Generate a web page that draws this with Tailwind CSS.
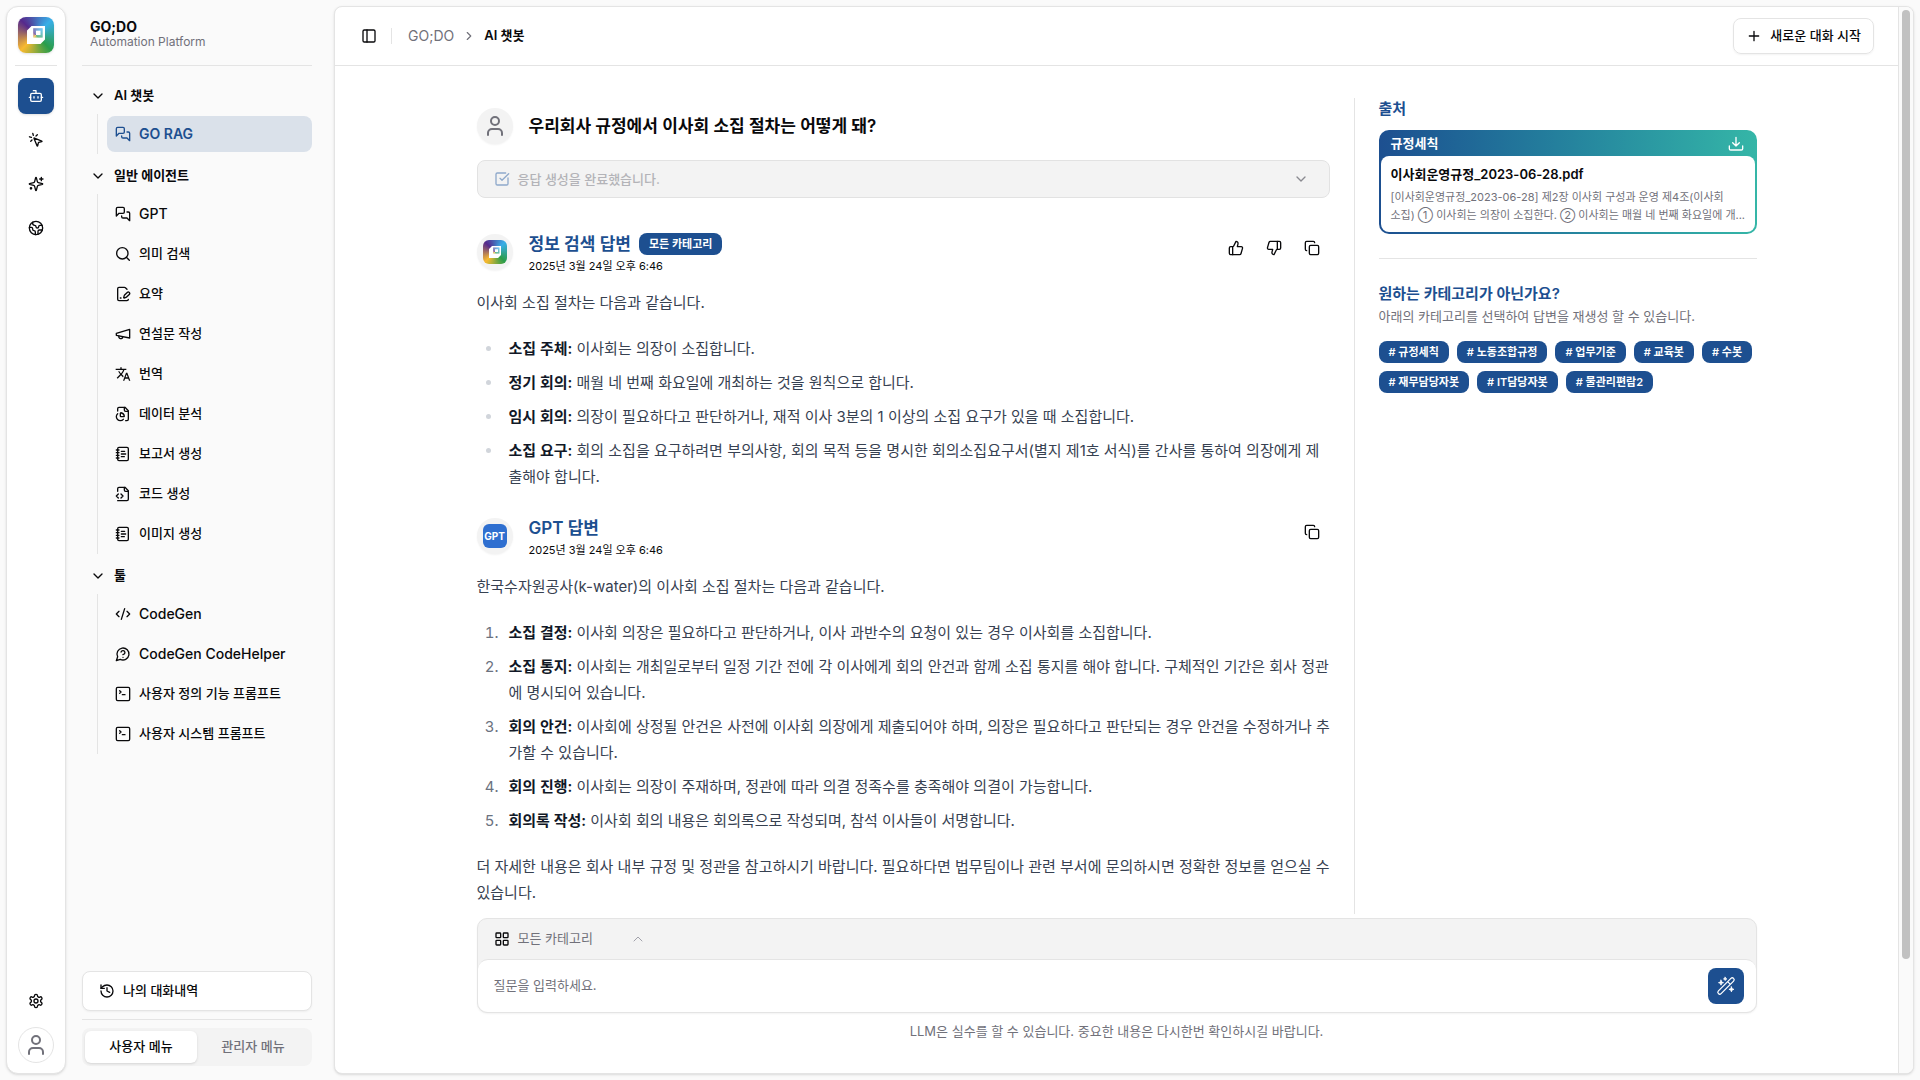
<!DOCTYPE html>
<html lang="ko">
<head>
<meta charset="utf-8">
<meta name="viewport" content="width=device-width, initial-scale=1">
<title>GO;DO - AI 챗봇</title>
<script src="https://cdn.jsdelivr.net/npm/@tailwindcss/browser@4"></script>
</head>
<body class="bg-[#fafafa] font-['Inter','Noto_Sans_CJK_KR',sans-serif] text-[13px] text-[#09090b]">

<svg class="hidden" aria-hidden="true">
  <defs>
    <symbol id="bot" viewBox="0 0 24 24"><path d="M12 8V4H8"/><rect width="16" height="12" x="4" y="8" rx="2"/><path d="M2 14h2M20 14h2M15 13v2M9 13v2"/></symbol>
    <symbol id="click" viewBox="0 0 24 24"><path d="M14 4.1 12 6M5.1 8l-2.9-.8M6 12l-1.9 2M7.2 2.2 8 5.1"/><path d="M9.037 9.69a.498.498 0 0 1 .653-.653l11 4.5a.5.5 0 0 1-.074.949l-4.349 1.041a1 1 0 0 0-.74.739l-1.04 4.35a.5.5 0 0 1-.95.074z"/></symbol>
    <symbol id="sparkles" viewBox="0 0 24 24"><path d="M9.937 15.5A2 2 0 0 0 8.5 14.063l-6.135-1.582a.5.5 0 0 1 0-.962L8.500 9.936A2 2 0 0 0 9.937 8.500l1.582-6.135a.5.5 0 0 1 .963 0L14.063 8.500A2 2 0 0 0 15.500 9.937l6.135 1.581a.5.5 0 0 1 0 .964L15.500 14.063a2 2 0 0 0-1.437 1.437l-1.582 6.135a.5.5 0 0 1-.963 0z"/><path d="M20 2v5M22.500 4.500h-5"/><circle cx="4.500" cy="18.500" r="1"/></symbol>
    <symbol id="earth" viewBox="0 0 24 24"><path d="M21.54 15H17a2 2 0 0 0-2 2v4.540M7 3.340V5a3 3 0 0 0 3 3 2 2 0 0 1 2 2c0 1.100.900 2 2 2a2 2 0 0 0 2-2c0-1.100.900-2 2-2h3.170M11 21.950V18a2 2 0 0 0-2-2 2 2 0 0 1-2-2v-1a2 2 0 0 0-2-2H2.050"/><circle cx="12" cy="12" r="10"/></symbol>
    <symbol id="chats" viewBox="0 0 24 24"><path d="M14 9a2 2 0 0 1-2 2H6l-4 4V4a2 2 0 0 1 2-2h8a2 2 0 0 1 2 2z"/><path d="M18 9h2a2 2 0 0 1 2 2v11l-4-4h-6a2 2 0 0 1-2-2v-1"/></symbol>
    <symbol id="search" viewBox="0 0 24 24"><circle cx="11" cy="11" r="8.5"/><path d="m21.5 21.5-4.5-4.5"/></symbol>
    <symbol id="filepen" viewBox="0 0 24 24"><path d="m18 5-2.414-2.414A2 2 0 0 0 14.172 2H6a2 2 0 0 0-2 2v16a2 2 0 0 0 2 2h12a2 2 0 0 0 2-2"/><path d="M21.378 12.626a1 1 0 0 0-3.004-3.004l-4.01 4.012a2 2 0 0 0-.506.854l-.837 2.87a.5.5 0 0 0 .62.62l2.87-.837a2 2 0 0 0 .854-.506z"/><path d="M8 18h1"/></symbol>
    <symbol id="megaphone" viewBox="0 0 24 24"><path d="m2 11 20-6v13L2 14v-3z"/><path d="M11.6 16.8a3 3 0 1 1-5.8-1.6"/></symbol>
    <symbol id="translate" viewBox="0 0 24 24"><path fill="currentColor" stroke="none" d="M12.87 15.07l-2.54-2.51.03-.03A17.52 17.52 0 0 0 14.07 6H17V4h-7V2H8v2H1v1.99h11.17C11.5 7.92 10.44 9.75 9 11.35 8.07 10.32 7.3 9.19 6.69 8h-2c.73 1.63 1.73 3.17 2.98 4.56l-5.09 5.02L4 19l5-5 3.11 3.11.76-2.04zM18.5 10h-2L12 22h2l1.12-3h4.75L21 22h2l-4.5-12zm-2.62 7l1.62-4.33L19.12 17h-3.24z"/></symbol>
    <symbol id="filepie" viewBox="0 0 24 24"><path d="M14 2v4a2 2 0 0 0 2 2h4"/><path d="M16 22h2a2 2 0 0 0 2-2V7l-5-5H6a2 2 0 0 0-2 2v3.5"/><path d="M4.017 11.512a6 6 0 1 0 8.466 8.475"/><path d="M9 16a1 1 0 0 1-1-1v-4c0-.552.45-1.008.995-.917a6 6 0 0 1 4.922 4.922c.091.544-.365.995-.917.995z"/></symbol>
    <symbol id="notebook" viewBox="0 0 24 24"><path d="M2 6h4M2 10h4M2 14h4M2 18h4"/><rect width="16" height="20" x="4" y="2" rx="2"/><path d="M9.5 8h5M9.5 12H16M9.5 16H14"/></symbol>
    <symbol id="filecode" viewBox="0 0 24 24"><path d="M4 22h14a2 2 0 0 0 2-2V7l-5-5H6a2 2 0 0 0-2 2v4"/><path d="M14 2v4a2 2 0 0 0 2 2h4"/><path d="m5 12-3 3 3 3M9 18l3-3-3-3"/></symbol>
    <symbol id="code" viewBox="0 0 24 24"><path d="m18 16 4-4-4-4M6 8l-4 4 4 4M14.5 4l-5 16"/></symbol>
    <symbol id="question" viewBox="0 0 24 24"><path d="M7.9 20A9 9 0 1 0 4 16.1L2 22Z"/><path d="M9.09 9a3 3 0 0 1 5.83 1c0 2-3 3-3 3M12 17h.01"/></symbol>
    <symbol id="terminal" viewBox="0 0 24 24"><path d="m7 11 2-2-2-2M11 13h4"/><rect width="20" height="20" x="2" y="2" rx="2"/></symbol>
    <symbol id="history" viewBox="0 0 24 24"><path d="M3 12a9 9 0 1 0 9-9 9.75 9.75 0 0 0-6.74 2.74L3 8"/><path d="M3 3v5h5M12 7v5l4 2"/></symbol>
    <symbol id="gear" viewBox="0 0 24 24"><path d="M12.22 2h-.44a2 2 0 0 0-2 2v.18a2 2 0 0 1-1 1.73l-.43.25a2 2 0 0 1-2 0l-.15-.08a2 2 0 0 0-2.73.73l-.22.38a2 2 0 0 0 .73 2.73l.15.1a2 2 0 0 1 1 1.72v.51a2 2 0 0 1-1 1.74l-.15.09a2 2 0 0 0-.73 2.73l.22.38a2 2 0 0 0 2.73.73l.15-.08a2 2 0 0 1 2 0l.43.25a2 2 0 0 1 1 1.73V20a2 2 0 0 0 2 2h.44a2 2 0 0 0 2-2v-.18a2 2 0 0 1 1-1.73l.43-.25a2 2 0 0 1 2 0l.15.08a2 2 0 0 0 2.73-.73l.22-.39a2 2 0 0 0-.73-2.73l-.15-.08a2 2 0 0 1-1-1.74v-.5a2 2 0 0 1 1-1.74l.15-.09a2 2 0 0 0 .73-2.73l-.22-.38a2 2 0 0 0-2.73-.73l-.15.08a2 2 0 0 1-2 0l-.43-.25a2 2 0 0 1-1-1.73V4a2 2 0 0 0-2-2z"/><circle cx="12" cy="12" r="3"/></symbol>
    <symbol id="user" viewBox="0 0 24 24"><path d="M19 21v-2a4 4 0 0 0-4-4H9a4 4 0 0 0-4 4v2"/><circle cx="12" cy="7" r="4"/></symbol>
    <symbol id="check" viewBox="0 0 24 24"><path d="M21 10.5V19a2 2 0 0 1-2 2H5a2 2 0 0 1-2-2V5a2 2 0 0 1 2-2h12.5"/><path d="m9 11 3 3L22 4"/></symbol>
    <symbol id="up" viewBox="0 0 24 24"><path d="M7 10v12"/><path d="M15 5.88 14 10h5.83a2 2 0 0 1 1.92 2.56l-2.33 8A2 2 0 0 1 17.5 22H4a2 2 0 0 1-2-2v-8a2 2 0 0 1 2-2h2.76a2 2 0 0 0 1.79-1.11L12 2a3.13 3.13 0 0 1 3 3.88Z"/></symbol>
    <symbol id="down" viewBox="0 0 24 24"><path d="M17 14V2"/><path d="M9 18.12 10 14H4.17a2 2 0 0 1-1.92-2.56l2.33-8A2 2 0 0 1 6.5 2H20a2 2 0 0 1 2 2v8a2 2 0 0 1-2 2h-2.76a2 2 0 0 0-1.79 1.11L12 22a3.13 3.13 0 0 1-3-3.88Z"/></symbol>
    <symbol id="copy" viewBox="0 0 24 24"><rect width="14" height="14" x="8" y="8" rx="2"/><path d="M4 16c-1.1 0-2-.9-2-2V4c0-1.1.9-2 2-2h10c1.1 0 2 .9 2 2"/></symbol>
    <symbol id="download" viewBox="0 0 24 24"><path d="M12 2v13M7 10l5 5 5-5M22 15v4a2 2 0 0 1-2 2H4a2 2 0 0 1-2-2v-4"/></symbol>
    <symbol id="grid" viewBox="0 0 24 24"><rect width="7" height="7" x="3" y="3" rx="1"/><rect width="7" height="7" x="14" y="3" rx="1"/><rect width="7" height="7" x="14" y="14" rx="1"/><rect width="7" height="7" x="3" y="14" rx="1"/></symbol>
    <symbol id="panel" viewBox="0 0 24 24"><rect width="18" height="18" x="3" y="3" rx="2"/><path d="M9 3v18"/></symbol>
    <symbol id="cdown" viewBox="0 0 24 24"><path d="m6 9 6 6 6-6"/></symbol>
    <symbol id="cup" viewBox="0 0 24 24"><path d="m6 15 6-6 6 6"/></symbol>
    <symbol id="cright" viewBox="0 0 24 24"><path d="m9 18 6-6-6-6"/></symbol>
    <symbol id="plus" viewBox="0 0 24 24"><path d="M5 12h14M12 5v14"/></symbol>
    <symbol id="wand" viewBox="0 0 24 24"><path d="m2.9 17.9 15-15a2.2 2.2 0 0 1 3.2 3.2l-15 15a2.2 2.2 0 0 1-3.2-3.2zM14 6.8l3.2 3.2"/><path fill="currentColor" stroke-width="1" d="m6 5 .8 2.2L9 8l-2.2.8L6 11l-.8-2.2L3 8l2.2-.8zM18.500 13l.8 2.200 2.200.8-2.200.8-.8 2.200-.8-2.200-2.200-.8 2.200-.8zM11 1.500l.6 1.400 1.400.6-1.400.6-.6 1.400-.6-1.400-1.400-.6 1.400-.6z"/></symbol>
    <symbol id="mark" viewBox="0 0 36 36"><path fill="#fff" stroke="none" fill-rule="evenodd" d="M13.500 9H27v13.500L22.500 27H9V13.500zM15.300 11.200v9.200h9.300v-9.200z"/><path fill="#fff" fill-opacity=".3" stroke="none" d="M15.300 11.200h9.300v9.200h-9.300z"/><path fill="#fff" stroke="none" d="M18 13.700h4.500V18H18z"/></symbol>
  </defs>
</svg>

<div class="flex min-h-screen p-1.5">

  <nav aria-label="주 메뉴" class="flex w-15 shrink-0 flex-col items-center rounded-xl border border-[#e4e4e4] bg-white py-2.5 shadow-sm">
    <a href="#" aria-label="GO;DO" class="size-9 rounded-lg bg-[conic-gradient(from_45deg,#38aee8,#2a9d4a_90deg,#f8b92f_180deg,#55298c_270deg,#38aee8)] shadow-sm"><svg class="size-9"><use href="#mark"/></svg></a>
    <hr class="mt-3 mb-3 w-[42px] border-[#e4e4e4]">
    <div class="flex flex-col gap-2">
      <a href="#" aria-label="AI 챗봇" class="flex size-9 items-center justify-center rounded-lg bg-[#1d4f90] text-white shadow-sm"><svg class="size-4 fill-none stroke-current stroke-2 [stroke-linecap:round] [stroke-linejoin:round]"><use href="#bot"/></svg></a>
      <a href="#" aria-label="자동화" class="flex size-9 items-center justify-center"><svg class="size-4 fill-none stroke-current stroke-2 [stroke-linecap:round] [stroke-linejoin:round]"><use href="#click"/></svg></a>
      <a href="#" aria-label="생성" class="flex size-9 items-center justify-center"><svg class="size-4 fill-none stroke-current stroke-2 [stroke-linecap:round] [stroke-linejoin:round]"><use href="#sparkles"/></svg></a>
      <a href="#" aria-label="탐색" class="flex size-9 items-center justify-center"><svg class="size-4 fill-none stroke-current stroke-2 [stroke-linecap:round] [stroke-linejoin:round]"><use href="#earth"/></svg></a>
    </div>
    <div class="mt-auto flex flex-col gap-2">
      <button aria-label="설정" class="flex size-9 items-center justify-center"><svg class="size-4 fill-none stroke-current stroke-2 [stroke-linecap:round] [stroke-linejoin:round]"><use href="#gear"/></svg></button>
      <button aria-label="내 계정" class="flex size-9 items-center justify-center rounded-full border border-[#e4e4e4] text-[#71717a]"><svg class="size-6 fill-none stroke-current stroke-2 [stroke-linecap:round] [stroke-linejoin:round]"><use href="#user"/></svg></button>
    </div>
  </nav>

  <aside class="flex w-[268px] shrink-0 flex-col pr-[22px] pb-2 pl-4">
    <div class="h-[60px] border-b border-[#e4e4e4] px-2 pt-[13px]">
      <div class="text-sm leading-4 font-bold">GO;DO</div>
      <div class="text-xs leading-[14px] text-[#71717a]">Automation Platform</div>
    </div>

    <div class="mt-3 flex flex-col gap-1">
      <section>
        <button class="flex h-9 items-center gap-2 px-2 font-semibold"><svg class="size-4 fill-none stroke-current stroke-2 [stroke-linecap:round] [stroke-linejoin:round]"><use href="#cdown"/></svg>AI 챗봇</button>
        <ul class="ml-[15px] border-l border-[#e4e4e4] py-0.5 pl-[9px]">
          <li><a href="#" class="flex h-9 items-center gap-2 rounded-lg bg-[#dae1ea] px-2 text-sm font-semibold text-[#1d4f90]"><svg class="size-4 fill-none stroke-current stroke-2 [stroke-linecap:round] [stroke-linejoin:round]"><use href="#chats"/></svg>GO RAG</a></li>
        </ul>
      </section>
      <section>
        <button class="flex h-9 items-center gap-2 px-2 font-semibold"><svg class="size-4 fill-none stroke-current stroke-2 [stroke-linecap:round] [stroke-linejoin:round]"><use href="#cdown"/></svg>일반 에이전트</button>
        <ul class="ml-[15px] flex flex-col gap-1 border-l border-[#e4e4e4] py-0.5 pl-[9px] font-medium">
          <li><a href="#" class="flex h-9 items-center gap-2 px-2 text-sm"><svg class="size-4 fill-none stroke-current stroke-2 [stroke-linecap:round] [stroke-linejoin:round]"><use href="#chats"/></svg>GPT</a></li>
          <li><a href="#" class="flex h-9 items-center gap-2 px-2"><svg class="size-4 fill-none stroke-current stroke-2 [stroke-linecap:round] [stroke-linejoin:round]"><use href="#search"/></svg>의미 검색</a></li>
          <li><a href="#" class="flex h-9 items-center gap-2 px-2"><svg class="size-4 fill-none stroke-current stroke-2 [stroke-linecap:round] [stroke-linejoin:round]"><use href="#filepen"/></svg>요약</a></li>
          <li><a href="#" class="flex h-9 items-center gap-2 px-2"><svg class="size-4 fill-none stroke-current stroke-2 [stroke-linecap:round] [stroke-linejoin:round]"><use href="#megaphone"/></svg>연설문 작성</a></li>
          <li><a href="#" class="flex h-9 items-center gap-2 px-2"><svg class="size-4"><use href="#translate"/></svg>번역</a></li>
          <li><a href="#" class="flex h-9 items-center gap-2 px-2"><svg class="size-4 fill-none stroke-current stroke-2 [stroke-linecap:round] [stroke-linejoin:round]"><use href="#filepie"/></svg>데이터 분석</a></li>
          <li><a href="#" class="flex h-9 items-center gap-2 px-2"><svg class="size-4 fill-none stroke-current stroke-2 [stroke-linecap:round] [stroke-linejoin:round]"><use href="#notebook"/></svg>보고서 생성</a></li>
          <li><a href="#" class="flex h-9 items-center gap-2 px-2"><svg class="size-4 fill-none stroke-current stroke-2 [stroke-linecap:round] [stroke-linejoin:round]"><use href="#filecode"/></svg>코드 생성</a></li>
          <li><a href="#" class="flex h-9 items-center gap-2 px-2"><svg class="size-4 fill-none stroke-current stroke-2 [stroke-linecap:round] [stroke-linejoin:round]"><use href="#notebook"/></svg>이미지 생성</a></li>
        </ul>
      </section>
      <section>
        <button class="flex h-9 items-center gap-2 px-2 font-semibold"><svg class="size-4 fill-none stroke-current stroke-2 [stroke-linecap:round] [stroke-linejoin:round]"><use href="#cdown"/></svg>툴</button>
        <ul class="ml-[15px] flex flex-col gap-1 border-l border-[#e4e4e4] py-0.5 pl-[9px] font-medium">
          <li><a href="#" class="flex h-9 items-center gap-2 px-2 text-sm"><svg class="size-4 fill-none stroke-current stroke-2 [stroke-linecap:round] [stroke-linejoin:round]"><use href="#code"/></svg>CodeGen</a></li>
          <li><a href="#" class="flex h-9 items-center gap-2 px-2 text-sm"><svg class="size-4 fill-none stroke-current stroke-2 [stroke-linecap:round] [stroke-linejoin:round]"><use href="#question"/></svg>CodeGen CodeHelper</a></li>
          <li><a href="#" class="flex h-9 items-center gap-2 px-2"><svg class="size-4 fill-none stroke-current stroke-2 [stroke-linecap:round] [stroke-linejoin:round]"><use href="#terminal"/></svg>사용자 정의 기능 프롬프트</a></li>
          <li><a href="#" class="flex h-9 items-center gap-2 px-2"><svg class="size-4 fill-none stroke-current stroke-2 [stroke-linecap:round] [stroke-linejoin:round]"><use href="#terminal"/></svg>사용자 시스템 프롬프트</a></li>
        </ul>
      </section>
    </div>

    <div class="mt-auto">
      <button class="flex h-10 w-full items-center gap-2 rounded-lg border border-[#e4e4e4] bg-white px-4 font-medium shadow-xs"><svg class="size-4 fill-none stroke-current stroke-2 [stroke-linecap:round] [stroke-linejoin:round]"><use href="#history"/></svg>나의 대화내역</button>
      <hr class="my-2 border-[#e4e4e4]">
      <div role="tablist" class="grid h-[38px] grid-cols-2 rounded-lg bg-[#f3f3f3] p-[3px] font-medium">
        <button role="tab" aria-selected="true" class="rounded-md bg-white shadow-sm">사용자 메뉴</button>
        <button role="tab" aria-selected="false" class="text-[#71717a]">관리자 메뉴</button>
      </div>
    </div>
  </aside>

  <div class="flex min-w-0 grow overflow-hidden rounded-lg border border-[#e4e4e4] bg-white shadow-sm">
    <main class="flex min-w-0 grow flex-col">
      <header class="flex h-[59px] shrink-0 items-center border-b border-[#e4e4e4] pr-6 pl-[26px]">
        <button aria-label="사이드바 접기"><svg class="size-4 fill-none stroke-current stroke-2 [stroke-linecap:round] [stroke-linejoin:round]"><use href="#panel"/></svg></button>
        <span class="ml-3.5 h-4 w-px bg-[#e4e4e4]"></span>
        <nav aria-label="현재 위치" class="ml-4 flex items-center gap-2">
          <a href="#" class="text-sm text-[#71717a]">GO;DO</a>
          <svg class="size-3.5 fill-none stroke-[#71717a] stroke-2 [stroke-linecap:round] [stroke-linejoin:round]"><use href="#cright"/></svg>
          <span class="font-semibold">AI 챗봇</span>
        </nav>
        <button class="ml-auto flex h-9 items-center gap-2 rounded-lg border border-[#e4e4e4] px-3 font-medium shadow-xs"><svg class="size-4 fill-none stroke-current stroke-2 [stroke-linecap:round] [stroke-linejoin:round]"><use href="#plus"/></svg>새로운 대화 시작</button>
      </header>

      <div class="mx-auto flex w-full max-w-7xl grow flex-col py-8">
        <div class="flex grow">
          <article class="min-w-0 grow pt-2.5 pr-[22px] text-[15px] leading-[26px] text-[#374151]">
            <div class="flex items-center gap-4">
              <span class="flex size-9 items-center justify-center rounded-full bg-[#f3f3f3] text-[#71717a] shadow-xs"><svg class="size-6 fill-none stroke-current stroke-2 [stroke-linecap:round] [stroke-linejoin:round]"><use href="#user"/></svg></span>
              <h1 class="text-[17px] font-semibold text-[#09090b]">우리회사 규정에서 이사회 소집 절차는 어떻게 돼?</h1>
            </div>
            <div class="mt-4 pr-0.5">
              <button disabled class="flex h-[38px] w-full items-center gap-2 rounded-lg border border-[#e2e2e2] bg-[#f3f3f3] px-4 text-[13px] font-medium text-[#b3b3b8]"><svg class="size-4 fill-none stroke-[#8fa9cb] stroke-2 [stroke-linecap:round] [stroke-linejoin:round]"><use href="#check"/></svg>응답 생성을 완료했습니다.<svg class="mr-1 ml-auto size-4 fill-none stroke-[#8a8a90] stroke-2 [stroke-linecap:round] [stroke-linejoin:round]"><use href="#cdown"/></svg></button>
            </div>

            <section class="mt-8">
              <div class="flex h-11 items-center gap-4">
                <span class="flex size-9 items-center justify-center rounded-full bg-[#f3f3f3] shadow-xs"><span class="size-6 rounded-md bg-[conic-gradient(from_45deg,#38aee8,#2a9d4a_90deg,#f8b92f_180deg,#55298c_270deg,#38aee8)]"><svg class="size-6"><use href="#mark"/></svg></span></span>
                <div class="pt-1">
                  <div class="flex h-6 items-center gap-2">
                    <h2 class="text-[17px] font-semibold text-[#1d4f90]">정보 검색 답변</h2>
                    <span class="flex h-[22px] items-center rounded-lg bg-[#1d4f90] px-2.5 text-[11px] font-semibold text-white">모든 카테고리</span>
                  </div>
                  <time class="block text-[11px] leading-5 text-[#09090b]">2025년 3월 24일 오후 6:46</time>
                </div>
                <div class="mr-3 mb-2 ml-auto flex gap-[22px] text-[#09090b]">
                  <button aria-label="좋아요"><svg class="size-4 fill-none stroke-current stroke-2 [stroke-linecap:round] [stroke-linejoin:round]"><use href="#up"/></svg></button>
                  <button aria-label="싫어요"><svg class="size-4 fill-none stroke-current stroke-2 [stroke-linecap:round] [stroke-linejoin:round]"><use href="#down"/></svg></button>
                  <button aria-label="복사"><svg class="size-4 fill-none stroke-current stroke-2 [stroke-linecap:round] [stroke-linejoin:round]"><use href="#copy"/></svg></button>
                </div>
              </div>
              <p class="mt-4">이사회 소집 절차는 다음과 같습니다.</p>
              <ul class="mt-5 flex list-disc flex-col gap-2 pl-[26px] marker:text-[#d1d5db]">
                <li class="pl-1.5"><strong class="font-semibold text-[#111827]">소집 주체:</strong> 이사회는 의장이 소집합니다.</li>
                <li class="pl-1.5"><strong class="font-semibold text-[#111827]">정기 회의:</strong> 매월 네 번째 화요일에 개최하는 것을 원칙으로 합니다.</li>
                <li class="pl-1.5"><strong class="font-semibold text-[#111827]">임시 회의:</strong> 의장이 필요하다고 판단하거나, 재적 이사 3분의 1 이상의 소집 요구가 있을 때 소집합니다.</li>
                <li class="pl-1.5"><strong class="font-semibold text-[#111827]">소집 요구:</strong> 회의 소집을 요구하려면 부의사항, 회의 목적 등을 명시한 회의소집요구서(별지 제1호 서식)를 간사를 통하여 의장에게 제출해야 합니다.</li>
              </ul>
            </section>

            <section class="mt-6">
              <div class="flex h-11 items-center gap-4">
                <span class="flex size-9 items-center justify-center rounded-full bg-[#f3f3f3] shadow-xs"><span class="flex size-6 items-center justify-center rounded-md bg-[#2f6fd0] text-[10px] font-bold text-white">GPT</span></span>
                <div class="pt-1">
                  <h2 class="h-6 text-[17px] leading-6 font-semibold text-[#1d4f90]">GPT 답변</h2>
                  <time class="block text-[11px] leading-5 text-[#09090b]">2025년 3월 24일 오후 6:46</time>
                </div>
                <button aria-label="복사" class="mr-3 mb-2 ml-auto text-[#09090b]"><svg class="size-4 fill-none stroke-current stroke-2 [stroke-linecap:round] [stroke-linejoin:round]"><use href="#copy"/></svg></button>
              </div>
              <p class="mt-4">한국수자원공사(k-water)의 이사회 소집 절차는 다음과 같습니다.</p>
              <ol class="mt-5 flex list-decimal flex-col gap-2 pl-[26px] marker:text-[#6b7280]">
                <li class="pl-1.5"><strong class="font-semibold text-[#111827]">소집 결정:</strong> 이사회 의장은 필요하다고 판단하거나, 이사 과반수의 요청이 있는 경우 이사회를 소집합니다.</li>
                <li class="pl-1.5"><strong class="font-semibold text-[#111827]">소집 통지:</strong> 이사회는 개최일로부터 일정 기간 전에 각 이사에게 회의 안건과 함께 소집 통지를 해야 합니다. 구체적인 기간은 회사 정관에 명시되어 있습니다.</li>
                <li class="pl-1.5"><strong class="font-semibold text-[#111827]">회의 안건:</strong> 이사회에 상정될 안건은 사전에 이사회 의장에게 제출되어야 하며, 의장은 필요하다고 판단되는 경우 안건을 수정하거나 추가할 수 있습니다.</li>
                <li class="pl-1.5"><strong class="font-semibold text-[#111827]">회의 진행:</strong> 이사회는 의장이 주재하며, 정관에 따라 의결 정족수를 충족해야 의결이 가능합니다.</li>
                <li class="pl-1.5"><strong class="font-semibold text-[#111827]">회의록 작성:</strong> 이사회 회의 내용은 회의록으로 작성되며, 참석 이사들이 서명합니다.</li>
              </ol>
              <p class="mt-5">더 자세한 내용은 회사 내부 규정 및 정관을 참고하시기 바랍니다. 필요하다면 법무팀이나 관련 부서에 문의하시면 정확한 정보를 얻으실 수 있습니다.</p>
            </section>
          </article>

          <aside class="w-[403px] shrink-0 border-l border-[#e4e4e4] pl-6">
            <h2 class="text-[15px] leading-[22px] font-semibold text-[#1d4f90]">출처</h2>
            <div class="mt-2.5 rounded-[10px] bg-linear-to-r from-[#1d4f90] to-[#35b6a7] p-0.5">
              <div class="flex h-6 items-center justify-between pr-[11px] pl-2.5 font-semibold text-white">규정세칙<button aria-label="다운로드"><svg class="size-4 fill-none stroke-current stroke-2 [stroke-linecap:round] [stroke-linejoin:round]"><use href="#download"/></svg></button></div>
              <div class="rounded-lg bg-white py-2 pr-1 pl-2.5">
                <h3 class="leading-5 font-semibold">이사회운영규정_2023-06-28.pdf</h3>
                <p class="mt-1 text-[11px] leading-[18px] text-[#71717a]">[이사회운영규정_2023-06-28] 제2장 이사회 구성과 운영 제4조(이사회<br>소집) ① 이사회는 의장이 소집한다. ② 이사회는 매월 네 번째 화요일에 개...</p>
              </div>
            </div>
            <hr class="my-6 border-[#e4e4e4]">
            <h2 class="text-[15px] leading-[22px] font-semibold text-[#1d4f90]">원하는 카테고리가 아닌가요?</h2>
            <p class="leading-[22px] text-[#71717a]">아래의 카테고리를 선택하여 답변을 재생성 할 수 있습니다.</p>
            <div class="mt-3.5 flex flex-wrap gap-2 text-[11px] font-semibold text-white">
              <button class="h-[22px] rounded-lg bg-[#1d4f90] px-2.5">&#35; 규정세칙</button>
              <button class="h-[22px] rounded-lg bg-[#1d4f90] px-2.5">&#35; 노동조합규정</button>
              <button class="h-[22px] rounded-lg bg-[#1d4f90] px-2.5">&#35; 업무기준</button>
              <button class="h-[22px] rounded-lg bg-[#1d4f90] px-2.5">&#35; 교육봇</button>
              <button class="h-[22px] rounded-lg bg-[#1d4f90] px-2.5">&#35; 수봇</button>
              <button class="h-[22px] rounded-lg bg-[#1d4f90] px-2.5">&#35; 재무담당자봇</button>
              <button class="h-[22px] rounded-lg bg-[#1d4f90] px-2.5">&#35; IT담당자봇</button>
              <button class="h-[22px] rounded-lg bg-[#1d4f90] px-2.5">&#35; 물관리편람2</button>
            </div>
          </aside>
        </div>

        <form class="mt-1 rounded-[10px] border border-[#e4e4e4] bg-[#f3f3f3] shadow-xs">
          <button type="button" class="flex h-10 w-[174px] items-center gap-2 pl-4 text-[#71717a]"><svg class="size-4 fill-none stroke-[#09090b] stroke-2 [stroke-linecap:round] [stroke-linejoin:round]"><use href="#grid"/></svg>모든 카테고리<svg class="mr-1.5 ml-auto size-4 fill-none stroke-[#a1a1aa] stroke-[1.5px] [stroke-linecap:round] [stroke-linejoin:round]"><use href="#cup"/></svg></button>
          <div class="flex h-[53px] items-center rounded-[10px] border-t border-[#e4e4e4] bg-white pr-3 pl-4">
            <input type="text" aria-label="질문" placeholder="질문을 입력하세요." class="min-w-0 grow outline-none placeholder:text-[#71717a]">
            <button aria-label="보내기" class="flex size-9 items-center justify-center rounded-lg bg-[#1d4f90] text-white"><svg class="size-5 fill-none stroke-current stroke-[1.5px] [stroke-linecap:round] [stroke-linejoin:round]"><use href="#wand"/></svg></button>
          </div>
        </form>
        <p class="mt-2 text-center leading-5 text-[#71717a]">LLM은 실수를 할 수 있습니다. 중요한 내용은 다시한번 확인하시길 바랍니다.</p>
      </div>
    </main>
    <div aria-hidden="true" class="w-[15px] shrink-0 border-l border-[#e4e4e4] bg-[#fafafa] px-[3px] py-[3px]"><div class="h-[89.5%] w-2 rounded-full bg-[#c1c1c1]"></div></div>
  </div>
</div>
</body>
</html>
